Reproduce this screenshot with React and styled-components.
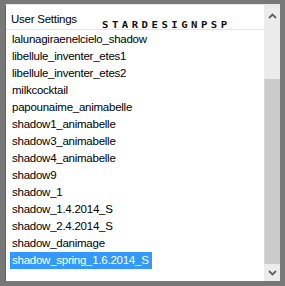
import styled, { createGlobalStyle } from 'styled-components';

const GlobalStyle = createGlobalStyle`
    html, body {
        margin: 0;
        padding: 0;
        background: #787878;
    }
`

const Frame = styled.div`
    width: 285px;
    height: 286px;
    box-sizing: border-box;
    padding: 4px 5px 5px 5px;
    background: #787878;
`

const ListBox = styled.div`
    height: 100%;
    box-sizing: border-box;
    display: flex;
    background: #fff;
    border-top: 1px solid #e8e8e8;
    border-left: 1px solid #646464;
    font-family: "Liberation Sans", Arial, sans-serif;
`

const Content = styled.div`
    flex: 1;
    display: flex;
    flex-direction: column;
    min-width: 0;
`

const Header = styled.div`
    position: relative;
    height: 24px;
    margin-top: 1px;
    display: flex;
    align-items: center;
    padding: 3px 0 0 5px;
    box-sizing: border-box;
    border-bottom: 1px solid #e5e5e5;
    font-size: 11.5px;
    letter-spacing: -0.25px;
    color: #000;
`

const Watermark = styled.span`
    position: absolute;
    left: 96px;
    top: 15px;
    font-family: "DejaVu Sans Mono", monospace;
    font-weight: bold;
    font-size: 8.5px;
    line-height: 9px;
    letter-spacing: 2.8px;
    color: #111;
    transform: scaleX(1.25);
    transform-origin: left top;
`

const Rows = styled.ul`
    list-style: none;
    margin: 0;
    padding: 0;
    padding-top: 1px;
`

const Row = styled.li`
    height: 17px;
    line-height: 17px;
    font-size: 11.5px;
    letter-spacing: -0.25px;
    padding-left: 4px;
`

const Label = styled.span`
    display: inline-block;
    padding: 0 3px 0 2px;
    color: ${p => (p.$selected ? '#fff' : '#000')};
    background: ${p => (p.$selected ? '#3399ff' : 'transparent')};
`

const ScrollBar = styled.div`
    width: 16px;
    display: flex;
    flex-direction: column;
    background: #e8e8e8;
    padding-top: 2px;
`

const Arrow = styled.div`
    height: 17px;
    display: flex;
    align-items: center;
    justify-content: center;
    background: #ececec;
`

const Track = styled.div`
    flex: 1;
    display: flex;
    flex-direction: column;
`

const Gap = styled.div`
    height: 55px;
    background: #ebebeb;
`

const Thumb = styled.div`
    flex: 1;
    background: #cbcbcb;
    border-left: 1px solid #d6d6d6;
`

const items = [
    'lalunagiraenelcielo_shadow',
    'libellule_inventer_etes1',
    'libellule_inventer_etes2',
    'milkcocktail',
    'papounaime_animabelle',
    'shadow1_animabelle',
    'shadow3_animabelle',
    'shadow4_animabelle',
    'shadow9',
    'shadow_1',
    'shadow_1.4.2014_S',
    'shadow_2.4.2014_S',
    'shadow_danimage',
    'shadow_spring_1.6.2014_S',
];

function Chevron({ up }) {
    return (
        <svg width="9" height="6" viewBox="0 0 9 6">
            <path
                d={up ? 'M1 5 L4.5 1.5 L8 5' : 'M1 1 L4.5 4.5 L8 1'}
                fill="none"
                stroke="#606060"
                strokeWidth="1.8"
            />
        </svg>
    );
}

function App() {
    return (
        <Frame>
            <GlobalStyle />
            <ListBox>
                <Content>
                    <Header>
                        User Settings
                        <Watermark>STARDESIGNPSP</Watermark>
                    </Header>
                    <Rows>
                        {items.map((name, i) => (
                            <Row key={name}>
                                <Label $selected={i === items.length - 1}>{name}</Label>
                            </Row>
                        ))}
                    </Rows>
                </Content>
                <ScrollBar>
                    <Arrow><Chevron up /></Arrow>
                    <Track>
                        <Gap />
                        <Thumb />
                    </Track>
                    <Arrow><Chevron /></Arrow>
                </ScrollBar>
            </ListBox>
        </Frame>
    );
}

export default App;
